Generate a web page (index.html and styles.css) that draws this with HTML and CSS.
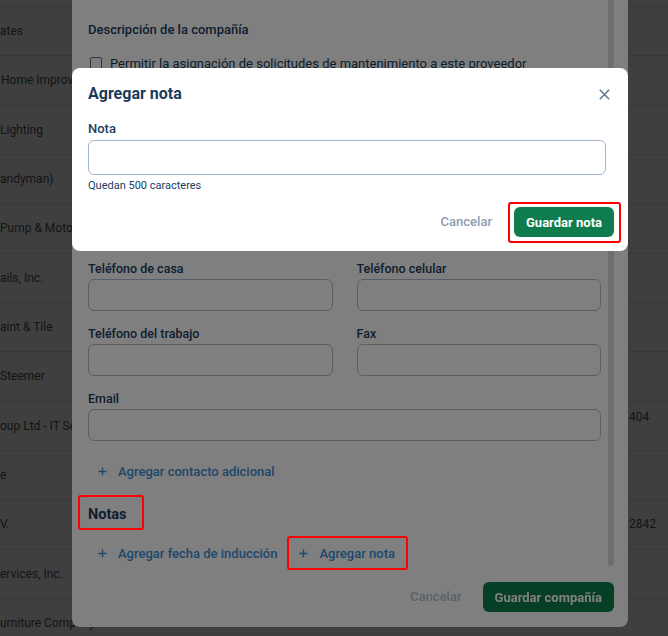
FILE: index.html
```html
<!DOCTYPE html>
<html lang="es">
<head>
<meta charset="utf-8">
<title>Agregar nota</title>
<link rel="stylesheet" href="styles.css">
</head>
<body>
<div class="table">
  <div class="table-head"></div>
  <div class="row"><span class="cell-name">ates</span><span class="cell-phone"></span></div>
  <div class="row"><span class="cell-name shift">Home Improvement</span><span class="cell-phone"></span></div>
  <div class="row"><span class="cell-name">Lighting</span><span class="cell-phone"></span></div>
  <div class="row"><span class="cell-name">andyman)</span><span class="cell-phone"></span></div>
  <div class="row"><span class="cell-name">Pump &amp; Motor</span><span class="cell-phone"></span></div>
  <div class="row"><span class="cell-name">ails, Inc.</span><span class="cell-phone"></span></div>
  <div class="row"><span class="cell-name">aint &amp; Tile</span><span class="cell-phone"></span></div>
  <div class="row"><span class="cell-name">Steemer</span><span class="cell-phone"></span></div>
  <div class="row"><span class="cell-name">oup Ltd - IT Services</span><span class="cell-phone">404<br>&nbsp;</span></div>
  <div class="row"><span class="cell-name">e</span><span class="cell-phone"></span></div>
  <div class="row"><span class="cell-name">V.</span><span class="cell-phone">2842</span></div>
  <div class="row"><span class="cell-name">ervices, Inc.</span><span class="cell-phone"></span></div>
  <div class="row"><span class="cell-name">urniture Company</span><span class="cell-phone"></span></div>
</div>

<div class="overlay"></div>

<div class="modal company">
  <div class="company-body">
    <div class="company-scroll">
      <h3 class="section-label">Descripción de la compañía</h3>
      <div class="check"><span class="box"></span><span>Permitir la asignación de solicitudes de mantenimiento a este proveedor</span></div>
      <div class="covered-section"></div>
      <div class="fields">
        <div class="field"><div class="label">Teléfono de casa</div><div class="input"></div></div>
        <div class="field"><div class="label">Teléfono celular</div><div class="input"></div></div>
        <div class="field"><div class="label">Teléfono del trabajo</div><div class="input"></div></div>
        <div class="field"><div class="label">Fax</div><div class="input"></div></div>
        <div class="field span2"><div class="label">Email</div><div class="input"></div></div>
      </div>
      <div class="links first-links">
        <span class="link"><svg class="plus" viewBox="0 0 9 9"><path d="M4.5 0.5v8M0.5 4.5h8"/></svg>Agregar contacto adicional</span>
      </div>
      <h4 class="notes-title">Notas</h4>
      <div class="links note-links">
        <span class="link"><svg class="plus" viewBox="0 0 9 9"><path d="M4.5 0.5v8M0.5 4.5h8"/></svg>Agregar fecha de inducción</span>
        <span class="link"><svg class="plus" viewBox="0 0 9 9"><path d="M4.5 0.5v8M0.5 4.5h8"/></svg>Agregar nota</span>
      </div>
    </div>
    <div class="scrollbar"></div>
  </div>
  <div class="modal-footer company-footer">
    <button class="btn-cancel dim-cancel">Cancelar</button>
    <button class="btn-primary">Guardar compañía</button>
  </div>
</div>

<div class="overlay"></div>

<div class="modal note">
  <div class="note-header">
    <h2 class="note-title">Agregar nota</h2>
    <svg class="close" viewBox="0 0 11 11"><path d="M0.8 0.8l9.4 9.4M10.2 0.8l-9.4 9.4"/></svg>
  </div>
  <div class="note-body">
    <div class="label note-label">Nota</div>
    <div class="textarea"></div>
    <div class="helper">Quedan 500 caracteres</div>
  </div>
  <div class="modal-footer note-footer">
    <button class="btn-cancel">Cancelar</button>
    <button class="btn-primary">Guardar nota</button>
  </div>
</div>

<div class="annot annot-save"></div>
<div class="annot annot-notas"></div>
<div class="annot annot-link"></div>
</body>
</html>
```

FILE: styles.css
```css
* {
  box-sizing: border-box;
  margin: 0;
  padding: 0;
}

html, body {
  width: 668px;
  height: 636px;
  overflow: hidden;
}

body {
  font-family: Roboto, "Liberation Sans", sans-serif;
  background: #fff;
  color: #505050;
}

/* background table */
.table {
  display: flex;
  flex-direction: column;
}

.table-head {
  height: 7px;
  border-bottom: 1px solid #dcdcdc;
}

.row {
  display: grid;
  grid-template-columns: 628px 1fr;
  align-items: center;
  height: 49.33px;
  flex: none;
  border-bottom: 1px solid #dcdcdc;
  font-size: 12px;
  white-space: nowrap;
  overflow: hidden;
}

.cell-name.shift {
  padding-left: 1px;
}

.cell-phone {
  padding-left: 1px;
  line-height: 18px;
}

.overlay {
  position: fixed;
  inset: 0;
  background: rgba(0, 0, 0, 0.5);
}

/* modals */
.modal {
  position: fixed;
  left: 72px;
  width: 556px;
  background: #fff;
  border-radius: 8px;
}

.company {
  top: -10px;
  bottom: 9px;
  display: flex;
  flex-direction: column;
}

.company-body {
  flex: 1;
  min-height: 0;
  display: flex;
}

.company-scroll {
  width: 529px;
  flex: none;
  padding-left: 16px;
  overflow: hidden;
}

.scrollbar {
  width: 6px;
  margin-left: 7px;
  background: #d9dfe5;
  border-radius: 0 0 3px 3px;
}

.section-label {
  margin-top: 30px;
  font-size: 13px;
  font-weight: 500;
  line-height: 20px;
  color: #213d5e;
}

.check {
  margin-top: 13px;
  display: flex;
  align-items: center;
  gap: 8px;
  height: 20px;
  padding-left: 2px;
  font-size: 13px;
  color: #213d5e;
  white-space: nowrap;
}

.box {
  width: 12px;
  height: 12px;
  border: 1.5px solid #56697f;
  border-radius: 2px;
  flex: none;
}

/* part of the form that lies under the note dialog */
.covered-section {
  height: 188px;
}

.fields {
  display: grid;
  grid-template-columns: 1fr 1fr;
  column-gap: 24px;
  row-gap: 15px;
}

.span2 {
  grid-column: 1 / -1;
}

.label {
  font-size: 12.5px;
  font-weight: 500;
  line-height: 16px;
  color: #213d5e;
  margin-bottom: 2px;
}

.input {
  height: 32px;
  border: 1px solid #aebfd1;
  border-radius: 6px;
}

.links {
  display: flex;
  gap: 2px;
  margin-top: 15px;
}

.note-links {
  margin-top: 13px;
}

.link {
  display: inline-flex;
  align-items: center;
  gap: 11px;
  height: 30px;
  padding: 0 10px;
  font-size: 13px;
  font-weight: 500;
  color: #3b8fd9;
  white-space: nowrap;
}

.plus {
  width: 9px;
  height: 9px;
  stroke: currentColor;
  stroke-width: 1.4;
  fill: none;
}

.notes-title {
  margin-top: 19px;
  font-size: 14.5px;
  font-weight: 700;
  line-height: 20px;
  color: #213d5e;
}

.modal-footer {
  display: flex;
  justify-content: flex-end;
  align-items: center;
}

.company-footer {
  gap: 21px;
  padding: 16px 14px 15px;
}

.btn-cancel {
  background: none;
  border: 0;
  font-family: inherit;
  font-size: 13px;
  font-weight: 500;
  line-height: 30px;
  color: #8d9db0;
}

.dim-cancel {
  color: #b4c0cc;
}

.btn-primary {
  height: 30px;
  padding: 0 12px;
  background: #0e7c4d;
  color: #fff;
  border: 0;
  border-radius: 6px;
  font-family: inherit;
  font-size: 13px;
  font-weight: 700;
}

/* note modal */
.note {
  top: 68px;
  padding: 14px 14px 14px 16px;
}

.note-header {
  display: flex;
  justify-content: space-between;
  align-items: center;
  height: 24px;
}

.note-title {
  font-size: 16px;
  font-weight: 700;
  line-height: 24px;
  color: #1b3a5c;
}

.close {
  width: 11px;
  height: 11px;
  margin-right: 4px;
  stroke: #5f7690;
  stroke-width: 1.5;
  fill: none;
}

.note-body {
  margin-top: 15px;
  padding-right: 8px;
}

.note-label {
  font-size: 13px;
  margin-bottom: 3px;
}

.textarea {
  height: 35px;
  border: 1px solid #a6b7cb;
  border-radius: 6px;
}

.helper {
  margin-top: 4px;
  font-size: 11px;
  line-height: 14px;
  color: #213d5e;
}

.note-footer {
  margin-top: 14px;
  gap: 22px;
}

/* red annotation boxes */
.annot {
  position: absolute;
  border: 2px solid #f00;
  border-radius: 3px;
}

.annot-save {
  left: 508px;
  top: 202px;
  width: 113px;
  height: 41px;
}

.annot-notas {
  left: 78px;
  top: 495px;
  width: 66px;
  height: 35px;
}

.annot-link {
  left: 287px;
  top: 536px;
  width: 121px;
  height: 34px;
}
```
